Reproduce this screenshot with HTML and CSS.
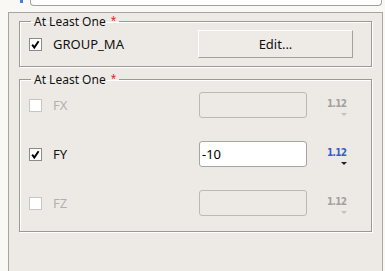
FILE: index.html
```html
<!DOCTYPE html>
<html lang="en">
<head>
  <meta charset="UTF-8" />
  <title>Force components</title>
  <link rel="stylesheet" href="styles.css">
</head>
<body>
  <div class="top">
    <span class="top-mark"></span>
    <div class="top-field"></div>
  </div>
  <div class="panel">
    <fieldset class="group">
      <legend>At Least One <span class="req">*</span></legend>
      <div class="row row-group">
        <span class="check on">
          <svg viewBox="0 0 11 11" width="11" height="11"><path d="M2.2 5.6 L4.3 8.6 L8.6 2.2" fill="none" stroke="#000" stroke-width="1.9"/></svg>
        </span>
        <span class="label">GROUP_MA</span>
        <button class="btn" type="button">Edit...</button>
      </div>
    </fieldset>

    <fieldset class="group group-fields">
      <legend>At Least One <span class="req">*</span></legend>
      <div class="row off">
        <span class="check"></span>
        <span class="label">FX</span>
        <input class="field" type="text" disabled>
        <span class="unit"><b>1.12</b><i class="arrow"></i></span>
      </div>
      <div class="row">
        <span class="check on">
          <svg viewBox="0 0 11 11" width="11" height="11"><path d="M2.2 5.6 L4.3 8.6 L8.6 2.2" fill="none" stroke="#000" stroke-width="1.9"/></svg>
        </span>
        <span class="label">FY</span>
        <input class="field" type="text" value="-10">
        <span class="unit active"><b>1.12</b><i class="arrow"></i></span>
      </div>
      <div class="row off">
        <span class="check"></span>
        <span class="label">FZ</span>
        <input class="field" type="text" disabled>
        <span class="unit"><b>1.12</b><i class="arrow"></i></span>
      </div>
    </fieldset>
  </div>
</body>
</html>
```

FILE: styles.css
```css
:root {
  --bg: #edeae6;
  --page: #faf8f5;
  --line: #9c9995;
  --muted: #b3b0ac;
}
* { box-sizing: border-box; }
html, body {
  margin: 0; padding: 0;
  background: var(--page);
  font-family: 'Noto Sans', 'Open Sans', sans-serif;
  font-size: 13px; color: #111;
}
body { overflow: hidden; height: 271px; }

.top { height: 12px; display: flex; align-items: flex-start; }
.top-mark {
  width: 3px; height: 3px; margin-left: 20px;
  background: #3d7fe0;
}
.top-field {
  margin-left: 7px; width: 352px; height: 6px;
  background: #fff;
  border: 1px solid #a5a29e; border-top: none;
  border-radius: 0 0 4px 4px;
}

.panel {
  margin-left: 8px; width: 375px; height: 300px;
  background: var(--bg);
  border: 1px solid #a8a5a1;
  padding: 0 10px;
}

.group {
  margin: 0; padding: 0 18px 8px 9px;
  border: 1px solid var(--line);
  box-shadow: inset 1px 1px 0 #fff, 1px 1px 0 #fff;
  min-width: 0;
}
.group legend {
  margin-left: 2px; padding: 0 3px;
  font-size: 12px; line-height: 14px;
}
.req { color: #e02020; font-size: 10px; vertical-align: 2px; margin-left: 2px; }

.row { display: flex; align-items: center; }
.row-group { margin-top: 1px; height: 28px; }

.check {
  width: 13px; height: 13px; flex: none;
  background: #fff;
  border: 1px solid #c8c6c3;
  display: flex; align-items: center; justify-content: center;
}
.check.on { border-color: #8d8b88; }
.label { margin-left: 11px; flex: 1; }
.off .label { color: var(--muted); }

.btn {
  width: 155px; height: 28px;
  font: inherit; color: #111;
  background: #eeebe7;
  border: 1px solid; border-color: #fff #a3a09c #a3a09c #fff;
  padding: 0;
}

.group-fields { margin-top: 4px; padding: 5px 19px 15px 9px; }
.group-fields .row { height: 26px; }
.group-fields .row + .row { margin-top: 23px; }

.field {
  width: 108px; height: 26px; flex: none;
  font: inherit; color: #000;
  padding: 0 2px;
  background: #fff;
  border: 1px solid #a9a6a2; border-radius: 3px;
  outline: none;
}
.field:disabled { background: var(--bg); border-color: #bcb9b5; }

.unit {
  width: 45px; flex: none;
  display: flex; flex-direction: column; align-items: flex-start;
  padding-left: 20px; margin-top: 4px;
}
.unit b {
  font-family: 'DejaVu Sans Condensed', 'DejaVu Sans', sans-serif;
  font-size: 10px; line-height: 11px; letter-spacing: -0.7px;
  color: #a3a19e;
}
.unit .arrow {
  margin: 4px 0 0 14px;
  border-left: 3px solid transparent; border-right: 3px solid transparent;
  border-top: 3px solid #c2c0bd;
}
.unit.active b { color: #3a5bc7; }
.unit.active .arrow { border-top-color: #222; }
```
